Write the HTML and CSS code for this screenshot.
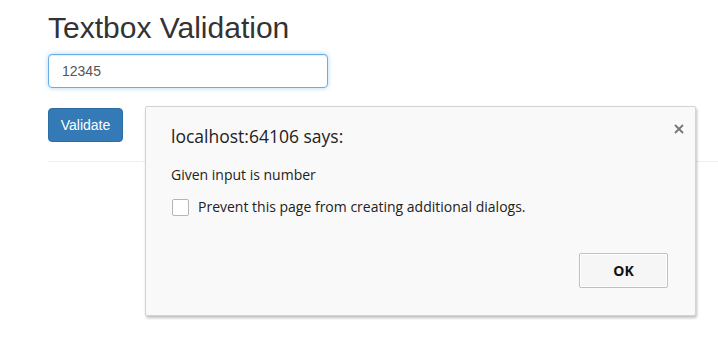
FILE: index.html
```html
<!DOCTYPE html>
<html lang="en">
<head>
    <meta charset="UTF-8">
    <meta name="viewport" content="width=device-width, initial-scale=1.0">
    <title>Textbox Validation</title>
    <link rel="stylesheet" href="styles.css">
</head>
<body>
    <div class="container">
        <h2>Textbox Validation</h2>
        <input type="text" class="form-control" value="12345">
        <button class="btn-primary">Validate</button>
        <hr>
    </div>

    <!-- alert() do navegador -->
    <div class="alert-dialog">
        <span class="alert-close">
            <svg width="10" height="10" viewBox="0 0 10 10">
                <path d="M1 1 L9 9 M9 1 L1 9" stroke="#777" stroke-width="1.8" fill="none"/>
            </svg>
        </span>
        <div class="alert-title">localhost:64106 says:</div>
        <div class="alert-message">Given input is number</div>
        <label class="alert-check">
            <span class="check-box"></span>
            Prevent this page from creating additional dialogs.
        </label>
        <div class="alert-buttons">
            <button class="alert-ok">OK</button>
        </div>
    </div>
</body>
</html>
```

FILE: styles.css
```css
body {
    font-family: "Liberation Sans", Arial, sans-serif;
    font-size: 14px;
    color: #333;
    margin: 0;
    background: #fff;
}
.container {
    padding-left: 48px;
}
h2 {
    font-size: 30px;
    font-weight: 500;
    line-height: 33px;
    margin: 11px 0 10px;
}
.form-control {
    display: block;
    box-sizing: border-box;
    width: 280px;
    height: 34px;
    padding: 6px 13px;
    font-family: inherit;
    font-size: 14px;
    color: #555;
    border: 1px solid #66afe9;
    border-radius: 4px;
    outline: none;
    box-shadow: inset 0 1px 1px rgba(0, 0, 0, .075), 0 0 5px rgba(102, 175, 233, .5);
}
.btn-primary {
    display: block;
    margin-top: 20px;
    width: 75px;
    height: 34px;
    padding: 0;
    font-family: inherit;
    font-size: 14px;
    color: #fff;
    background-color: #337ab7;
    border: 1px solid #2e6da4;
    border-radius: 4px;
}
hr {
    margin: 19px 0 0;
    border: 0;
    border-top: 1px solid #eee;
}

/* caixa de alerta */
.alert-dialog {
    position: absolute;
    left: 145px;
    top: 106px;
    width: 551px;
    height: 210px;
    box-sizing: border-box;
    padding: 17px 25px 0 25px;
    background: #f9f9f9;
    border: 1px solid #d4d4d4;
    border-radius: 2px;
    box-shadow: 1px 2px 3px rgba(0, 0, 0, .25);
    font-family: "Open Sans", sans-serif;
    color: #222;
}
.alert-close {
    position: absolute;
    top: 12px;
    right: 11px;
}
.alert-title {
    font-size: 17.5px;
    line-height: 24px;
}
.alert-message {
    font-size: 14px;
    line-height: 20px;
    margin-top: 17px;
}
.alert-check {
    display: flex;
    align-items: center;
    gap: 9px;
    margin-top: 12px;
    font-size: 14px;
    line-height: 20px;
}
.check-box {
    width: 15px;
    height: 15px;
    margin-left: 1px;
    background: #fff;
    border: 1px solid #b5b5b5;
    border-radius: 2px;
}
.alert-buttons {
    display: flex;
    justify-content: flex-end;
    margin-top: 36px;
    padding-right: 2px;
}
.alert-ok {
    width: 89px;
    height: 35px;
    font-family: "Open Sans", sans-serif;
    font-size: 14px;
    font-weight: bold;
    color: #111;
    background: #f6f6f6;
    border: 1px solid #a9c2f2;
    border-radius: 2px;
    box-shadow: inset 0 0 0 1px #fff;
}
```
